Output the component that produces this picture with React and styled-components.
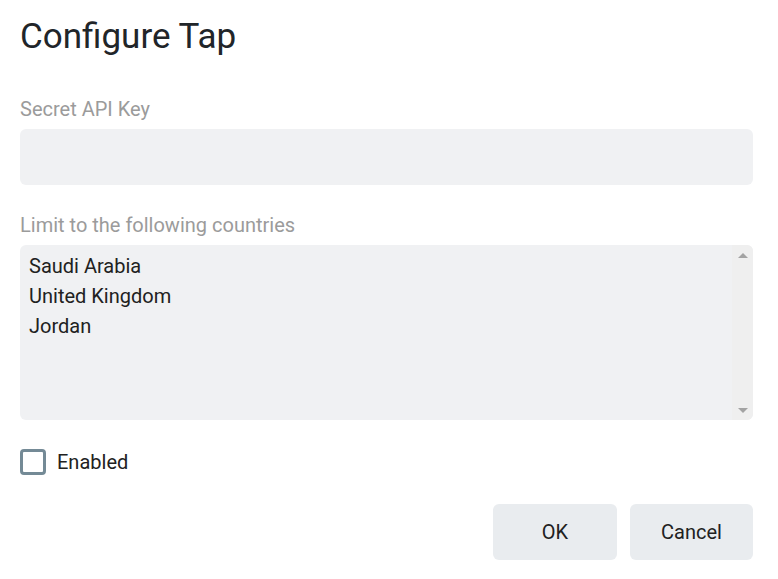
import React from "react";
import styled, { createGlobalStyle } from "styled-components";

const Global = createGlobalStyle`
  html, body { margin: 0; padding: 0; background: #ffffff; }
  body { font-family: Roboto, "Liberation Sans", sans-serif; color: #212529; }
  * { box-sizing: border-box; }
`;

const Dialog = styled.div`
  width: 778px;
  height: 579px;
  padding: 16px 25px 0 20px;
  display: flex;
  flex-direction: column;
`;

const Title = styled.h1`
  margin: 0;
  font-size: 35px;
  font-weight: 400;
  line-height: 42px;
  color: #212529;
`;

const Field = styled.div`
  display: flex;
  flex-direction: column;
  gap: 5px;
  margin-top: ${(p) => p.$top}px;
`;

const Label = styled.label`
  font-size: 20px;
  line-height: 30px;
  color: #9b9b9b;
`;

const TextInput = styled.div`
  height: 56px;
  border-radius: 6px;
  background: #f0f1f3;
`;

const ListBox = styled.div`
  height: 175px;
  border-radius: 6px;
  background: #f0f1f3;
  display: flex;
  overflow: hidden;
`;

const Options = styled.div`
  flex: 1;
  padding: 6px 9px;
  display: flex;
  flex-direction: column;
`;

const Option = styled.div`
  font-size: 20px;
  line-height: 30px;
  color: #212121;
`;

const ScrollBar = styled.div`
  width: 21px;
  background: #efefef;
  display: flex;
  flex-direction: column;
  justify-content: space-between;
  align-items: center;
  padding: 8px 0 7px;
`;

const Arrow = styled.div`
  width: 0;
  height: 0;
  border-left: 5px solid transparent;
  border-right: 5px solid transparent;
  ${(p) =>
    p.$down
      ? "border-top: 5px solid #a3a3a3;"
      : "border-bottom: 5px solid #a3a3a3;"}
`;

const CheckRow = styled.label`
  margin-top: 29px;
  display: flex;
  align-items: center;
  gap: 11px;
  font-size: 20px;
  line-height: 26px;
  color: #212121;
`;

const Box = styled.span`
  width: 26px;
  height: 26px;
  border: 3px solid #748a96;
  border-radius: 4px;
  background: #fff;
`;

const Actions = styled.div`
  margin-top: 29px;
  display: flex;
  justify-content: flex-end;
  gap: 13px;
`;

const Button = styled.button`
  width: ${(p) => p.$w}px;
  height: 56px;
  border: none;
  border-radius: 6px;
  background: #e9ecef;
  font-family: Roboto, "Liberation Sans", sans-serif;
  font-size: 20px;
  color: #212121;
  padding: 0;
`;

export default function App() {
  return (
    <>
      <Global />
      <Dialog>
        <Title>Configure Tap</Title>
        <Field $top={36}>
          <Label>Secret API Key</Label>
          <TextInput />
        </Field>
        <Field $top={25}>
          <Label>Limit to the following countries</Label>
          <ListBox>
            <Options>
              <Option>Saudi Arabia</Option>
              <Option>United Kingdom</Option>
              <Option>Jordan</Option>
            </Options>
            <ScrollBar>
              <Arrow />
              <Arrow $down />
            </ScrollBar>
          </ListBox>
        </Field>
        <CheckRow>
          <Box />
          Enabled
        </CheckRow>
        <Actions>
          <Button $w={124}>OK</Button>
          <Button $w={123}>Cancel</Button>
        </Actions>
      </Dialog>
    </>
  );
}
